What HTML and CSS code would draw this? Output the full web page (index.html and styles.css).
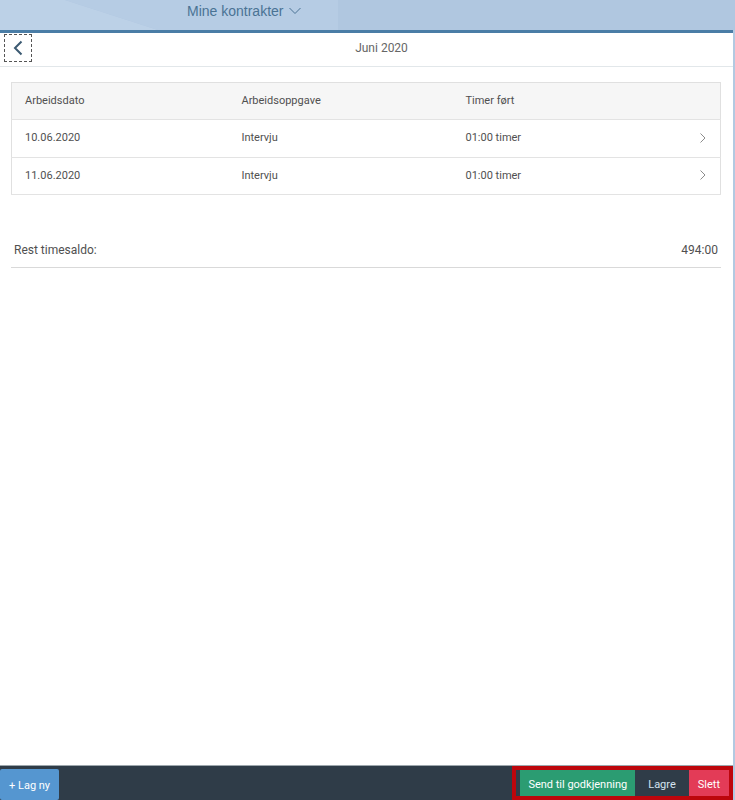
FILE: index.html
```html
<!DOCTYPE html>
<html lang="no">
<head>
<meta charset="utf-8">
<meta name="viewport" content="width=device-width, initial-scale=1">
<title>Mine kontrakter</title>
<link rel="stylesheet" href="styles.css">
</head>
<body>
<header class="shell">
  <svg class="shell-art" viewBox="0 0 735 30" preserveAspectRatio="none" aria-hidden="true">
    <path d="M0 0H65L158 30H0Z" fill="#bcd1e7"/>
    <path d="M65 0H338V30H158Z" fill="#b6cce4"/>
  </svg>
  <button class="shell-title" type="button">Mine kontrakter
    <svg width="12" height="8" viewBox="0 0 12 8" aria-hidden="true"><path d="M.5 1 6 6.5 11.500 1" fill="none" stroke="#4a7394"/></svg>
  </button>
</header>
<div class="page">
  <div class="page-bar">
    <button class="back" type="button" aria-label="Tilbake">
      <svg width="10" height="16" viewBox="0 0 10 16" aria-hidden="true"><path d="M8.500 1.500 2 8l6.500 6.500" fill="none" stroke="#3c5a72" stroke-width="2"/></svg>
    </button>
    <h1>Juni 2020</h1>
  </div>
  <main>
    <table>
      <thead>
        <tr><th class="date">Arbeidsdato</th><th class="task">Arbeidsoppgave</th><th>Timer ført</th><th class="nav"></th></tr>
      </thead>
      <tbody>
        <tr><td>10.06.2020</td><td>Intervju</td><td>01:00 timer</td><td class="nav"><svg width="6" height="10" viewBox="0 0 6 10" aria-hidden="true"><path d="M.5.5 5 5 .5 9.500" fill="none" stroke="#8c8c8c"/></svg></td></tr>
        <tr><td>11.06.2020</td><td>Intervju</td><td>01:00 timer</td><td class="nav"><svg width="6" height="10" viewBox="0 0 6 10" aria-hidden="true"><path d="M.5.5 5 5 .5 9.500" fill="none" stroke="#8c8c8c"/></svg></td></tr>
      </tbody>
    </table>
    <div class="balance"><span>Rest timesaldo:</span><span>494:00</span></div>
  </main>
</div>
<footer>
  <button class="new" type="button">+ Lag ny</button>
  <div class="actions">
    <button class="send" type="button">Send til godkjenning</button>
    <button class="save" type="button">Lagre</button>
    <button class="delete" type="button">Slett</button>
  </div>
</footer>
</body>
</html>
```
FILE: styles.css
```css
* { box-sizing: border-box; }
body {
  margin: 0;
  min-height: 100vh;
  display: flex;
  flex-direction: column;
  background: #b2c9e1;
  color: #505050;
  font-family: Roboto, sans-serif;
  font-size: 11px;
}
button { border: 0; padding: 0; background: none; color: inherit; font: inherit; }
svg { flex: none; }
.shell { position: relative; height: 30px; padding-left: 187px; background: #b0c7e0; }
.shell-art { position: absolute; inset: 0; width: 100%; height: 100%; }
.shell-title {
  position: relative;
  display: flex;
  align-items: center;
  gap: 6px;
  height: 22px;
  color: #4a7394;
  font: 14px "Liberation Sans", sans-serif;
}
.page {
  flex: 1;
  margin-right: 2px;
  border-top: 3px solid #4a7da6;
  background: #fff;
}
.page-bar {
  display: grid;
  grid-template-columns: 28px 1fr 28px;
  align-items: center;
  height: 34px;
  padding: 0 4px 4px;
  border-bottom: 1px solid #e2e7ea;
}
.back {
  display: grid;
  place-items: center;
  height: 28px;
  border: 1px dashed #555;
}
h1 { margin: 0; padding-left: 30px; color: #666; font-size: 12px; font-weight: 400; text-align: center; }
main { padding: 15px 12px 0 11px; }
table { width: 100%; border: 1px solid #e0e0e0; border-collapse: collapse; table-layout: fixed; }
th, td { height: 37px; padding: 0 0 2px 13px; font-weight: 400; text-align: left; }
tbody tr:first-child td { height: 38px; }
tr { border-bottom: 1px solid #e3e3e3; }
th { background: #f6f6f6; }
.date { width: 30.6%; }
.task { width: 31.6%; }
td.nav, th.nav { width: 40px; padding: 0 14px 2px 0; }
.nav svg { display: block; margin-left: auto; }
.balance {
  display: flex;
  justify-content: space-between;
  margin-top: 45px;
  padding: 0 3px 7px;
  border-bottom: 1px solid #d9d9d9;
  font-size: 12px;
  line-height: 20px;
}
footer {
  display: flex;
  justify-content: space-between;
  align-items: flex-end;
  height: 35px;
  margin-right: 2px;
  border-top: 1px solid #9da7ad;
  background: #2f3c48;
  color: #fff;
}
.new { height: 31px; padding: 2px 9px 0; border-radius: 2px; background: #5596d0; }
.actions {
  display: flex;
  height: 34px;
  border: 4px solid #bd060c;
  padding-left: 4px;
}
.actions button { padding: 3px 9px 0; }
.actions .send { padding: 3px 8px 0; background: #2b9c72; }
.actions .save { padding: 3px 13px 0; color: #d5e3f0; }
.actions .delete { background: #e33b57; }
```
